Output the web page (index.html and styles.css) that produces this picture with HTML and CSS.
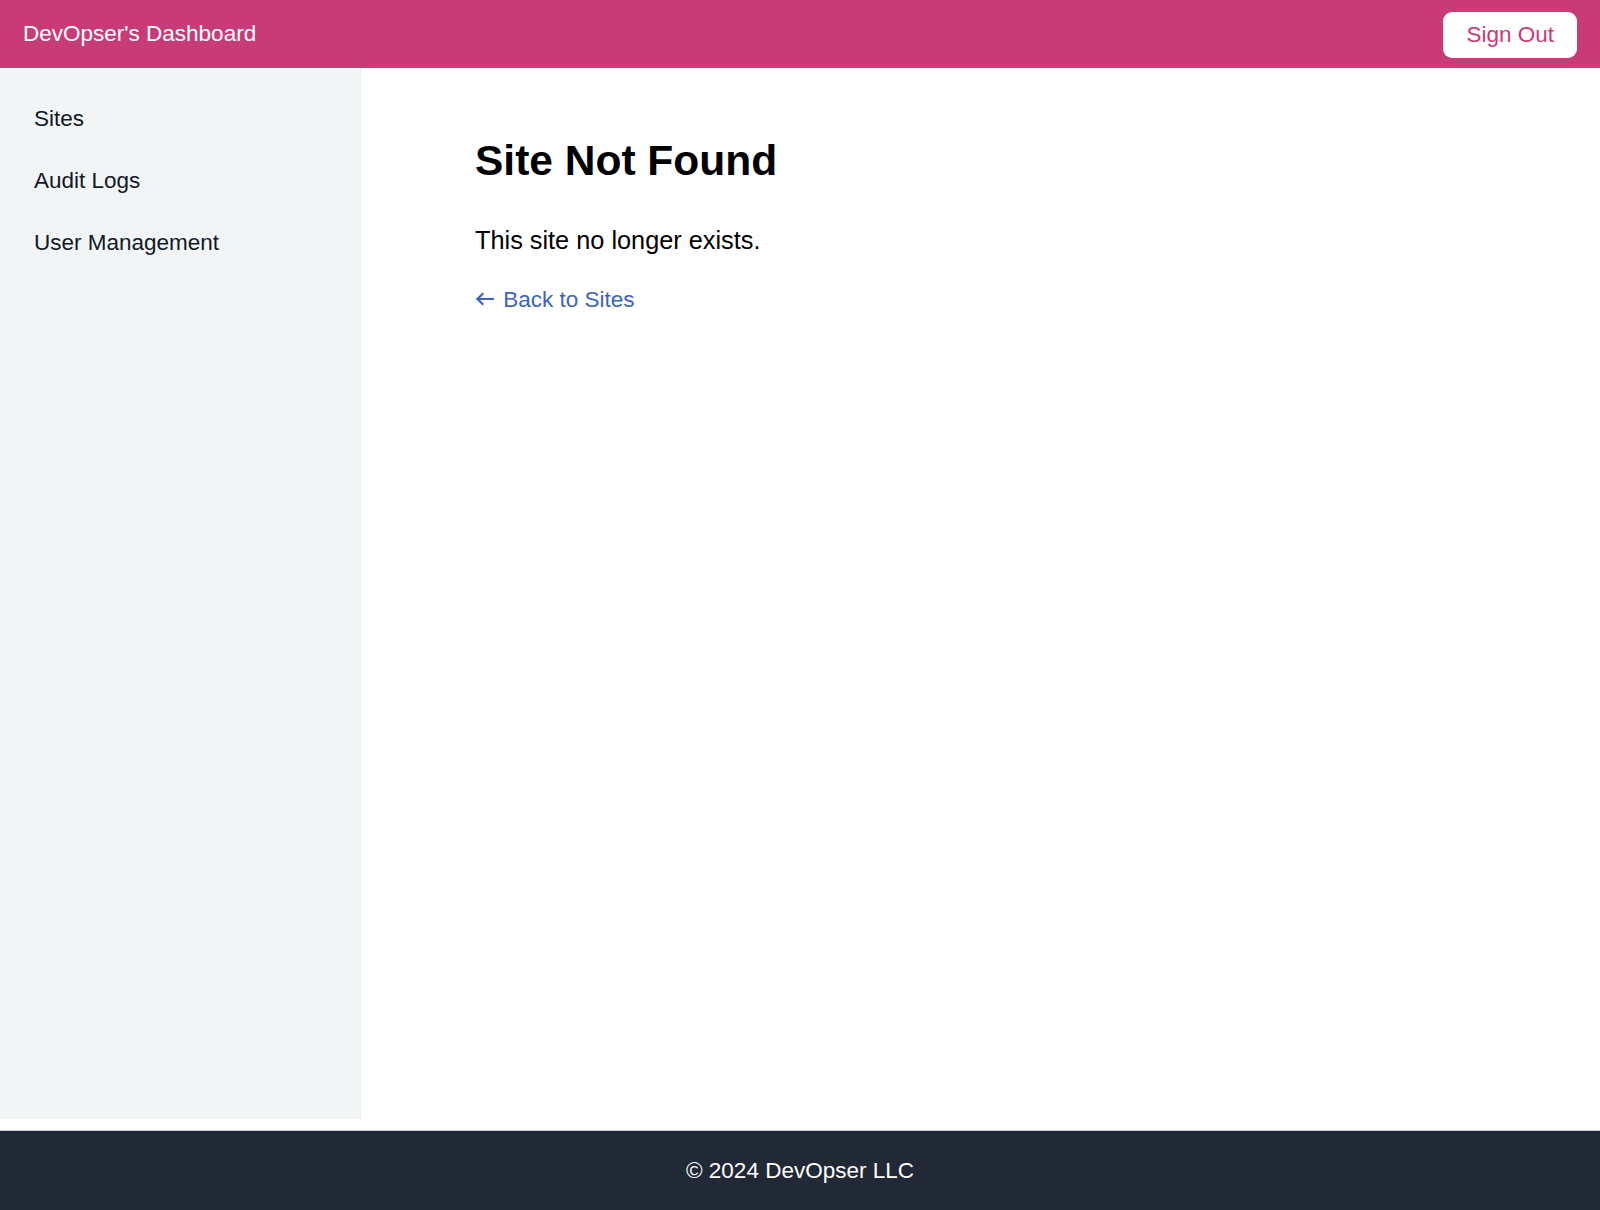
FILE: index.html
```html
<!DOCTYPE HTML>
<html>
<head>
<title>DevOpser's Dashboard</title>
<link rel="stylesheet" href="styles.css">
</head>
<body>

<div id="top_bar">
<p class="top_title">DevOpser's Dashboard</p>
<button class="sign_out">Sign Out</button>
</div>

<div id="layout">
<div id="side_menu">
<a class="side_menu_item" href="#">Sites</a>
<a class="side_menu_item" href="#">Audit Logs</a>
<a class="side_menu_item" href="#">User Management</a>
</div>
<div id="content">
<h1>Site Not Found</h1>
<p class="message">This site no longer exists.</p>
<a class="back_link" href="#"><svg class="back_arrow" width="19" height="14" viewBox="0 0 19 14"><path d="M18 7H2.5M7.5 2L2.5 7l5 5" fill="none" stroke="#3b63c4" stroke-width="2.2" stroke-linecap="square"/></svg> Back to Sites</a>
</div>
</div>

<div id="footer">
<p>&copy; 2024 DevOpser LLC</p>
</div>

</body>
</html>
```

FILE: styles.css
```css
html {
	font-family:"Liberation Sans", Arial, sans-serif;
}
body {
	margin:0;
	min-height:100vh;
	display:flex;
	flex-direction:column;
	background-color:#ffffff;
}
#top_bar {
	background-color:#c93b76;
	height:68px;
	padding:0 23px;
	display:flex;
	align-items:center;
	justify-content:space-between;
	box-sizing:border-box;
}
.top_title {
	margin:0;
	color:#ffffff;
	font-size:22.5px;
	line-height:26px;
}
.sign_out {
	background-color:#ffffff;
	color:#c93b76;
	border:none;
	border-radius:9px;
	font-family:inherit;
	font-size:22.5px;
	line-height:26px;
	height:46px;
	padding:0 23px;
	margin-top:1px;
	cursor:pointer;
}
#layout {
	flex:1;
	display:flex;
	margin-bottom:11px;
}
#side_menu {
	width:361px;
	background-color:#f1f5f6;
	padding-top:20px;
	box-sizing:border-box;
	border-right:1px solid #eceff0;
}
.side_menu_item {
	display:block;
	padding:18px 0 18px 34px;
	font-size:22.5px;
	line-height:26px;
	color:#111827;
	text-decoration:none;
}
#content {
	flex:1;
	padding:69px 0 0 114px;
}
#content h1 {
	margin:0;
	font-size:42.5px;
	line-height:48px;
	font-weight:bold;
	color:#000000;
}
.message {
	margin:40px 0 0 0;
	font-size:25.3px;
	line-height:30px;
	color:#000000;
}
.back_link {
	display:inline-block;
	margin-top:32px;
	font-size:22.5px;
	line-height:26px;
	color:#3b63c4;
	text-decoration:none;
}
.back_arrow {
	vertical-align:1px;
	margin-right:3px;
}
#footer {
	height:80px;
	background-color:#212836;
	border-top:1px solid #c9ced6;
	box-sizing:border-box;
	display:flex;
	align-items:center;
	justify-content:center;
}
#footer p {
	margin:0;
	color:#ffffff;
	font-size:22.5px;
	line-height:26px;
}
```
